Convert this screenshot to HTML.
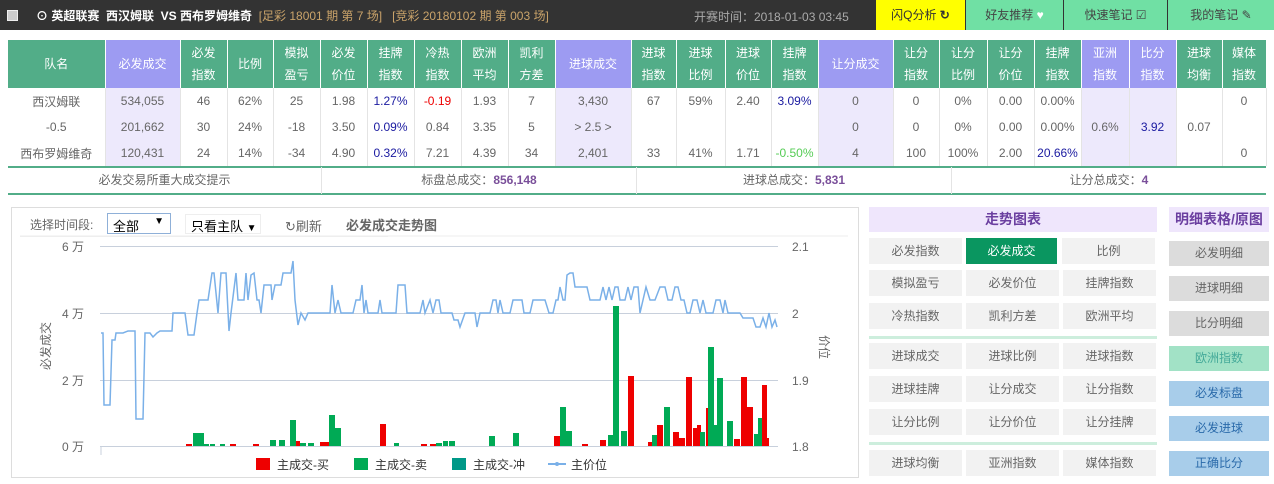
<!DOCTYPE html>
<html><head><meta charset="utf-8">
<style>
*{margin:0;padding:0;box-sizing:border-box}
body{width:1274px;height:484px;background:#fff;font-family:"Liberation Sans","Noto Sans CJK SC",sans-serif;font-size:12px;color:#555;position:relative;overflow:hidden}
.top{position:absolute;left:0;top:0;width:1274px;height:30px;background:#333}
.abs{position:absolute;white-space:nowrap}
table{position:absolute;left:8px;top:40px;border-collapse:collapse;table-layout:fixed}
td{text-align:center;font-size:12px;color:#666;height:26px;border-right:1px solid #e4e4e4;padding:0}
tr.h td{height:48px;background:#52ad88;color:#fff;line-height:22px;border-right:1px solid #fff}
tr.h td.p{background:#9d9bf2}
td.l{background:#ede9fc}
.b{color:#1a1aa0}.r{color:#e00}.g{color:#5c5}
.sum{position:absolute;top:167px;height:27px;line-height:26px;text-align:center;font-size:12px;color:#666}
.btn{position:absolute;height:26px;line-height:26px;text-align:center;background:#f2f2f2;font-size:12px;color:#666}
.rb{position:absolute;left:1169px;width:100px;height:25px;line-height:25px;text-align:center;font-size:12px;background:#dcdcdc;color:#666}
</style></head><body>
<div class="top"></div>
<div class="abs" style="left:7px;top:10px;width:11px;height:11px;background:#ccc;border:1px solid #eee"></div>
<div class="abs" style="left:36px;top:7px;color:#fff;font-size:12px;font-weight:bold">⊙ 英超联赛 &nbsp;西汉姆联 &nbsp;VS 西布罗姆维奇 <span style="font-weight:normal;color:#c9a36a">&nbsp;[足彩 18001 期 第 7 场] &nbsp;&nbsp;[竞彩 20180102 期 第 003 场]</span></div>
<div class="abs" style="left:694px;top:8px;color:#aaa;font-size:12px">开赛时间：2018-01-03 03:45</div>
<div class="abs" style="left:876px;top:0;width:89px;height:30px;background:#ff0;color:#333;line-height:30px;text-align:center">闪Q分析 <b>↻</b></div>
<div class="abs" style="left:966px;top:0;width:97px;height:30px;background:#70e0a4;color:#444;line-height:30px;text-align:center">好友推荐 <span style="color:#fff">♥</span></div>
<div class="abs" style="left:1064px;top:0;width:103px;height:30px;background:#70e0a4;color:#444;line-height:30px;text-align:center">快速笔记 ☑</div>
<div class="abs" style="left:1168px;top:0;width:106px;height:30px;background:#70e0a4;color:#444;line-height:30px;text-align:center">我的笔记 ✎</div>

<table>
<colgroup><col style="width:97px"><col style="width:75px"><col style="width:47px"><col style="width:46px"><col style="width:47px"><col style="width:47px"><col style="width:47px"><col style="width:47px"><col style="width:47px"><col style="width:47px"><col style="width:76px"><col style="width:45px"><col style="width:49px"><col style="width:46px"><col style="width:47px"><col style="width:75px"><col style="width:46px"><col style="width:48px"><col style="width:47px"><col style="width:47px"><col style="width:48px"><col style="width:47px"><col style="width:46px"><col style="width:44px"></colgroup>
<tr class="h"><td>队名</td><td class="p">必发成交</td><td>必发<br>指数</td><td>比例</td><td>模拟<br>盈亏</td><td>必发<br>价位</td><td>挂牌<br>指数</td><td>冷热<br>指数</td><td>欧洲<br>平均</td><td>凯利<br>方差</td><td class="p">进球成交</td><td>进球<br>指数</td><td>进球<br>比例</td><td>进球<br>价位</td><td>挂牌<br>指数</td><td class="p">让分成交</td><td>让分<br>指数</td><td>让分<br>比例</td><td>让分<br>价位</td><td>挂牌<br>指数</td><td class="p">亚洲<br>指数</td><td class="p">比分<br>指数</td><td>进球<br>均衡</td><td>媒体<br>指数</td></tr>
<tr><td>西汉姆联</td><td class="l">534,055</td><td>46</td><td>62%</td><td>25</td><td>1.98</td><td class="b">1.27%</td><td class="r">-0.19</td><td>1.93</td><td>7</td><td class="l">3,430</td><td>67</td><td>59%</td><td>2.40</td><td class="b">3.09%</td><td class="l">0</td><td>0</td><td>0%</td><td>0.00</td><td>0.00%</td><td class="l" rowspan="3">0.6%</td><td class="l b" rowspan="3">3.92</td><td rowspan="3">0.07</td><td>0</td></tr>
<tr><td>-0.5</td><td class="l">201,662</td><td>30</td><td>24%</td><td>-18</td><td>3.50</td><td class="b">0.09%</td><td>0.84</td><td>3.35</td><td>5</td><td class="l">&gt; 2.5 &gt;</td><td></td><td></td><td></td><td></td><td class="l">0</td><td>0</td><td>0%</td><td>0.00</td><td>0.00%</td><td></td></tr>
<tr><td>西布罗姆维奇</td><td class="l">120,431</td><td>24</td><td>14%</td><td>-34</td><td>4.90</td><td class="b">0.32%</td><td>7.21</td><td>4.39</td><td>34</td><td class="l">2,401</td><td>33</td><td>41%</td><td>1.71</td><td class="g">-0.50%</td><td class="l">4</td><td>100</td><td>100%</td><td>2.00</td><td class="b">20.66%</td><td>0</td></tr>
</table>
<div class="abs" style="left:8px;top:166px;width:1258px;height:2px;background:#52ad88"></div>
<div class="abs" style="left:8px;top:193px;width:1258px;height:2px;background:#52ad88"></div>
<div class="sum" style="left:8px;width:314px;border-right:1px solid #e4e4e4">必发交易所重大成交提示</div>
<div class="sum" style="left:322px;width:315px;border-right:1px solid #e4e4e4">标盘总成交：<b style="color:#7a4f9a">856,148</b></div>
<div class="sum" style="left:637px;width:315px;border-right:1px solid #e4e4e4">进球总成交：<b style="color:#7a4f9a">5,831</b></div>
<div class="sum" style="left:952px;width:314px">让分总成交：<b style="color:#7a4f9a">4</b></div>

<div class="abs" style="left:11px;top:207px;width:848px;height:271px;border:1px solid #ddd"></div>
<div class="abs" style="left:30px;top:216px;color:#666">选择时间段:</div>
<div class="abs" style="left:107px;top:213px;width:64px;height:21px;border:1px solid #8fb0d8;font-size:13px;color:#000;padding:2px 5px">全部 <span style="position:absolute;right:6px;font-size:10px">▼</span></div>
<div class="abs" style="left:185px;top:214px;width:76px;height:20px;border:1px solid #eee;font-size:13px;color:#000;padding:1px 5px">只看主队 <span style="font-size:10px">▼</span></div>
<div class="abs" style="left:285px;top:216px;color:#666;font-size:13px">↻刷新</div>
<div class="abs" style="left:346px;top:215px;color:#666;font-size:13px;font-weight:bold">必发成交走势图</div>
<div class="abs" style="left:20px;top:236px;width:368px;height:1px;background:#eee"></div>
<div class="abs" style="left:20px;top:236px;width:368px;height:1px;background:#eee"></div>
<svg class="abs" style="left:0;top:0" width="860" height="484">
<line x1="20" y1="236" x2="848" y2="236" stroke="#eee"/>
<g stroke="#c8d0dc" stroke-width="1">
<line x1="100" y1="246.5" x2="778" y2="246.5"/><line x1="100" y1="313.5" x2="778" y2="313.5"/><line x1="100" y1="380.5" x2="778" y2="380.5"/><line x1="100" y1="446.5" x2="778" y2="446.5"/><line x1="101" y1="446" x2="101" y2="455"/></g>
<g font-size="12" fill="#666" font-family="Liberation Sans,Noto Sans CJK SC,sans-serif">
<text x="62" y="251">6 万</text><text x="62" y="318">4 万</text><text x="62" y="385">2 万</text><text x="62" y="451">0 万</text>
<text x="792" y="251">2.1</text><text x="792" y="318">2</text><text x="792" y="385">1.9</text><text x="792" y="451">1.8</text>
<text transform="translate(50,370) rotate(-90)">必发成交</text>
<text transform="translate(820,335) rotate(90)">价位</text>
<rect x="256" y="458" width="14" height="12" fill="#e00"/><text x="277" y="469" fill="#333">主成交-买</text>
<rect x="354" y="458" width="14" height="12" fill="#0a5"/><text x="375" y="469" fill="#333">主成交-卖</text>
<rect x="452" y="458" width="14" height="12" fill="#098"/><text x="473" y="469" fill="#333">主成交-冲</text>
<line x1="548" y1="464" x2="566" y2="464" stroke="#7ab0e8" stroke-width="2"/><circle cx="557" cy="464" r="2" fill="#7ab0e8"/><text x="571" y="469" fill="#333">主价位</text>
</g>
<g>
<rect x="186" y="444" width="6" height="2" fill="#e00"/><rect x="193" y="433" width="11" height="13" fill="#0a5"/><rect x="204" y="444" width="5" height="2" fill="#0a5"/><rect x="210" y="444" width="5" height="2" fill="#0a5"/><rect x="220" y="444" width="5" height="2" fill="#0a5"/><rect x="230" y="444" width="6" height="2" fill="#e00"/><rect x="253" y="444" width="6" height="2" fill="#e00"/>
<rect x="270" y="440" width="6" height="6" fill="#0a5"/><rect x="279" y="440" width="6" height="6" fill="#0a5"/><rect x="290" y="420" width="6" height="26" fill="#0a5"/><rect x="296" y="441" width="4" height="5" fill="#e00"/><rect x="300" y="443" width="6" height="3" fill="#0a5"/><rect x="308" y="443" width="6" height="3" fill="#0a5"/><rect x="320" y="442" width="5" height="4" fill="#e00"/><rect x="325" y="442" width="4" height="4" fill="#e00"/><rect x="329" y="415" width="6" height="31" fill="#0a5"/><rect x="335" y="428" width="6" height="18" fill="#0a5"/>
<rect x="380" y="424" width="6" height="22" fill="#e00"/><rect x="394" y="443" width="5" height="3" fill="#0a5"/><rect x="421" y="444" width="6" height="2" fill="#e00"/><rect x="430" y="444" width="6" height="2" fill="#e00"/><rect x="436" y="443" width="6" height="3" fill="#0a5"/><rect x="443" y="441" width="5" height="5" fill="#0a5"/><rect x="449" y="441" width="6" height="5" fill="#0a5"/>
<rect x="489" y="436" width="6" height="10" fill="#0a5"/><rect x="513" y="433" width="6" height="13" fill="#0a5"/><rect x="554" y="436" width="6" height="10" fill="#e00"/><rect x="560" y="407" width="6" height="39" fill="#0a5"/><rect x="566" y="431" width="6" height="15" fill="#0a5"/><rect x="582" y="444" width="6" height="2" fill="#e00"/><rect x="600" y="440" width="6" height="6" fill="#e00"/><rect x="608" y="435" width="6" height="11" fill="#0a5"/><rect x="613" y="306" width="6" height="140" fill="#0a5"/><rect x="621" y="431" width="6" height="15" fill="#0a5"/><rect x="628" y="376" width="6" height="70" fill="#e00"/>
<rect x="648" y="442" width="4" height="4" fill="#e00"/><rect x="652" y="435" width="5" height="11" fill="#0a5"/><rect x="657" y="425" width="6" height="21" fill="#e00"/><rect x="664" y="407" width="6" height="39" fill="#0a5"/><rect x="673" y="432" width="6" height="14" fill="#e00"/><rect x="679" y="438" width="6" height="8" fill="#e00"/><rect x="686" y="377" width="6" height="69" fill="#e00"/><rect x="693" y="428" width="6" height="18" fill="#e00"/><rect x="697" y="425" width="4" height="21" fill="#e00"/><rect x="700" y="432" width="5" height="14" fill="#0a5"/><rect x="706" y="408" width="3" height="38" fill="#e00"/><rect x="708" y="347" width="6" height="99" fill="#0a5"/><rect x="714" y="425" width="3" height="21" fill="#0a5"/><rect x="717" y="378" width="6" height="68" fill="#0a5"/><rect x="727" y="421" width="6" height="25" fill="#0a5"/><rect x="734" y="439" width="6" height="7" fill="#e00"/><rect x="741" y="377" width="6" height="69" fill="#e00"/><rect x="747" y="407" width="6" height="39" fill="#e00"/><rect x="754" y="434" width="4" height="12" fill="#0a5"/><rect x="758" y="418" width="5" height="28" fill="#0a5"/><rect x="762" y="385" width="5" height="61" fill="#e00"/><rect x="766" y="438" width="3" height="8" fill="#e00"/>
</g>
<polyline fill="none" stroke="#7ab0e8" stroke-width="1.5" points="101,333 103,333 104,405 110,405 112,340 115,340 116,333 123,333 128,331 135,331 136,419 143,419 145,333 150,333 153,337 157,333 160,331 172,331 173,313 185,313 188,335 194,335 197,313 199,300 208,300 212,273 214,273 218,313 221,273 226,273 229,331 231,313 236,273 238,300 244,300 246,273 248,300 251,275 254,273 257,300 259,300 261,313 264,285 271,285 272,300 275,285 281,285 283,273 291,273 293,261 295,300 298,325 301,313 305,320 308,313 330,313 332,285 335,313 338,300 341,313 353,313 356,300 360,300 362,285 364,313 366,300 368,313 378,313 380,300 382,313 396,313 398,285 405,285 407,313 420,313 423,300 425,313 430,300 433,313 436,300 439,300 441,313 452,313 454,320 458,320 460,327 465,313 475,313 477,327 480,313 490,313 493,300 496,300 498,313 500,300 503,313 510,313 513,300 522,300 524,313 530,313 533,300 545,300 549,313 553,313 556,300 558,300 560,287 563,300 565,300 567,275 570,273 573,273 575,287 587,287 590,300 600,300 603,287 606,300 609,287 612,300 615,287 618,287 620,300 625,300 628,287 631,300 634,287 638,287 640,313 643,300 646,287 650,300 655,300 660,287 665,287 668,300 672,300 675,287 678,287 681,300 684,300 687,313 690,313 693,300 697,300 700,313 703,300 706,313 713,313 716,300 720,300 723,313 725,300 728,313 737,313 740,313 743,318 753,318 756,327 760,327 763,318 766,327 769,313 772,327 775,320 777,327"/>
</svg>

<div class="abs" style="left:869px;top:207px;width:288px;height:25px;background:#efe6fc;color:#6b3fa0;font-weight:bold;font-size:14px;text-align:center;line-height:25px">走势图表</div>
<div class="btn" style="left:869px;top:238px;width:93px">必发指数</div><div class="btn" style="left:966px;top:238px;width:91px;background:#0a9660;color:#fff">必发成交</div><div class="btn" style="left:1062px;top:238px;width:93px">比例</div>
<div class="btn" style="left:869px;top:270px;width:93px">模拟盈亏</div><div class="btn" style="left:966px;top:270px;width:93px">必发价位</div><div class="btn" style="left:1063px;top:270px;width:93px">挂牌指数</div>
<div class="btn" style="left:869px;top:303px;width:93px">冷热指数</div><div class="btn" style="left:966px;top:303px;width:93px">凯利方差</div><div class="btn" style="left:1063px;top:303px;width:93px">欧洲平均</div>
<div class="abs" style="left:869px;top:336px;width:288px;height:3px;background:#cdeedd"></div>
<div class="btn" style="left:869px;top:343px;width:93px">进球成交</div><div class="btn" style="left:966px;top:343px;width:93px">进球比例</div><div class="btn" style="left:1063px;top:343px;width:93px">进球指数</div>
<div class="btn" style="left:869px;top:376px;width:93px">进球挂牌</div><div class="btn" style="left:966px;top:376px;width:93px">让分成交</div><div class="btn" style="left:1063px;top:376px;width:93px">让分指数</div>
<div class="btn" style="left:869px;top:409px;width:93px">让分比例</div><div class="btn" style="left:966px;top:409px;width:93px">让分价位</div><div class="btn" style="left:1063px;top:409px;width:93px">让分挂牌</div>
<div class="abs" style="left:869px;top:442px;width:288px;height:3px;background:#cdeedd"></div>
<div class="btn" style="left:869px;top:450px;width:93px">进球均衡</div><div class="btn" style="left:966px;top:450px;width:93px">亚洲指数</div><div class="btn" style="left:1063px;top:450px;width:93px">媒体指数</div>

<div class="rb" style="top:207px;background:#efe6fc;color:#6b3fa0;font-weight:bold;font-size:14px">明细表格/原图</div>
<div class="rb" style="top:241px">必发明细</div>
<div class="rb" style="top:276px">进球明细</div>
<div class="rb" style="top:311px">比分明细</div>
<div class="rb" style="top:346px;background:#a2e2c6;color:#4a9">欧洲指数</div>
<div class="rb" style="top:381px;background:#a8cdea;color:#2a6aaa">必发标盘</div>
<div class="rb" style="top:416px;background:#a8cdea;color:#2a6aaa">必发进球</div>
<div class="rb" style="top:451px;background:#a8cdea;color:#2a6aaa">正确比分</div>
</body></html>
